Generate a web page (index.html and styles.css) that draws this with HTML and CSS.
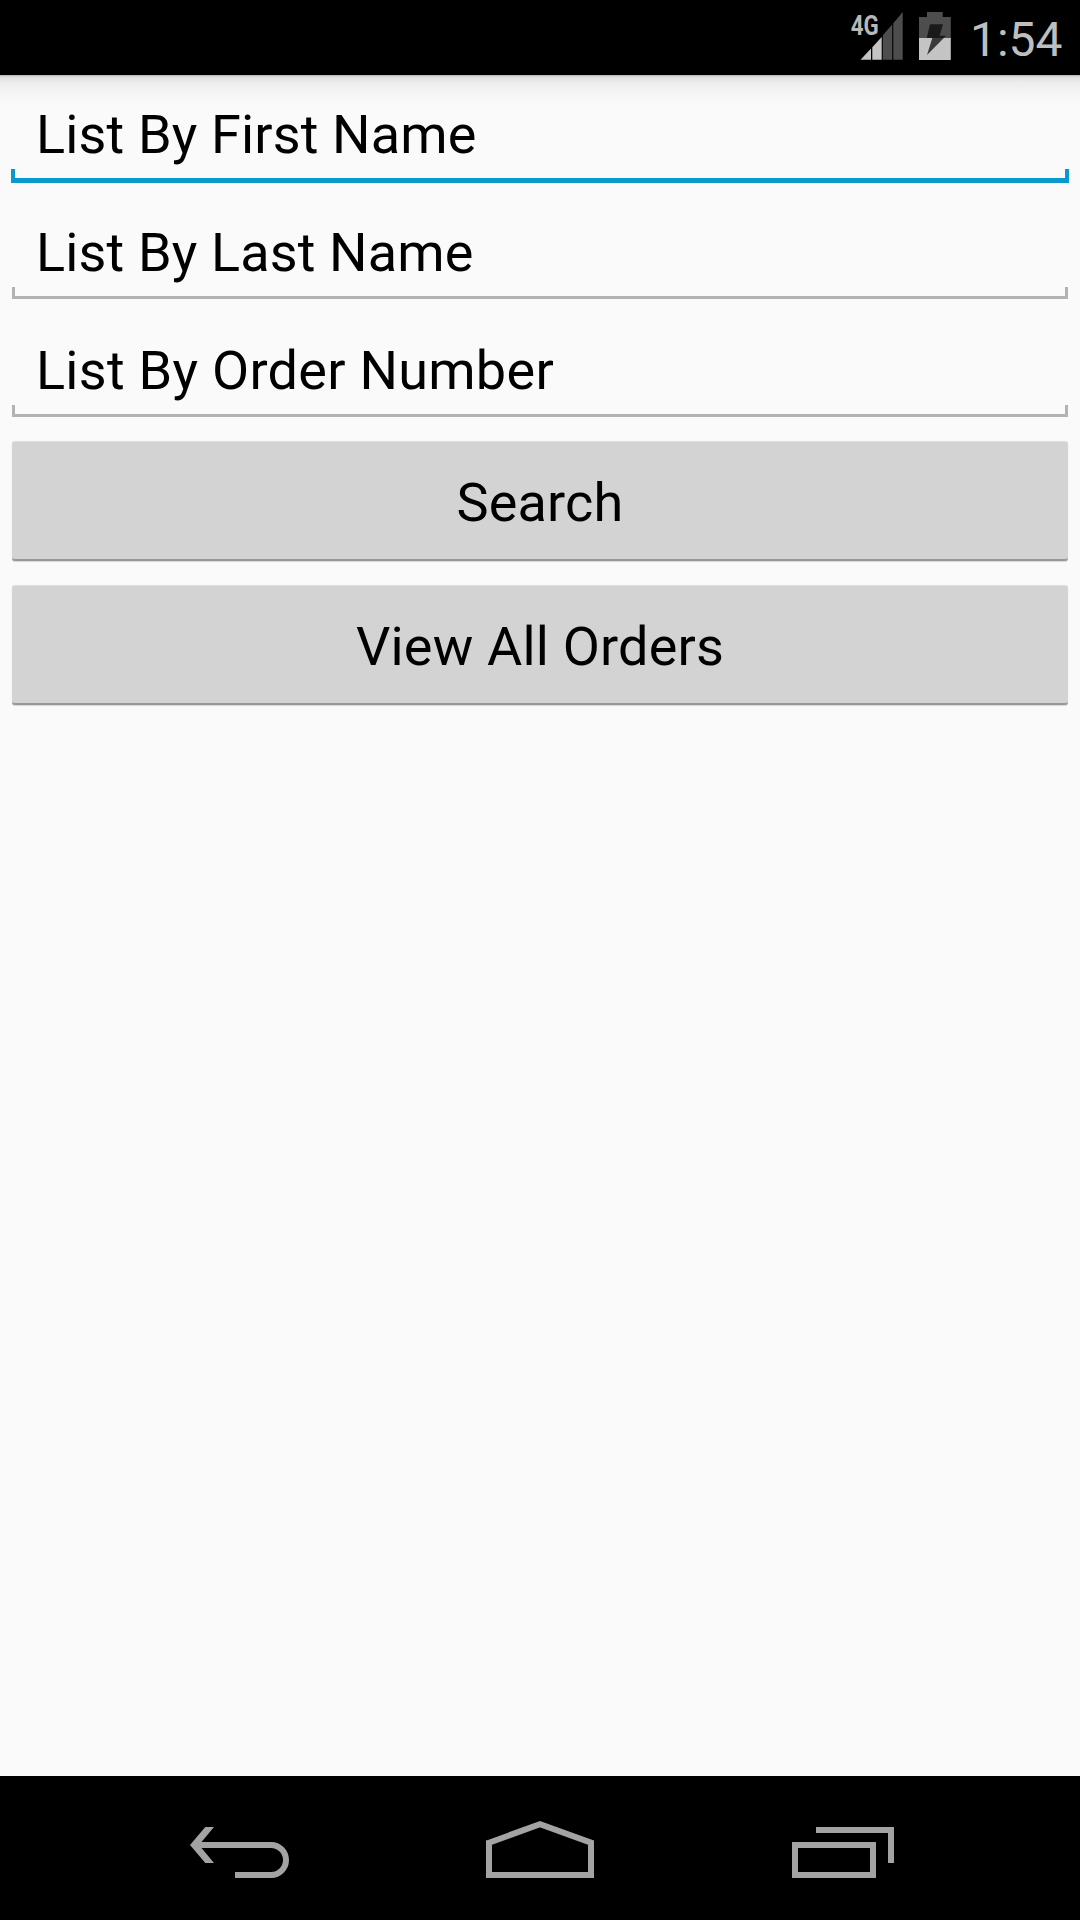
FILE: index.html
```html
<!DOCTYPE html>
<html lang="en">
<head>
  <meta charset="UTF-8">
  <title>Orders</title>
  <meta name="viewport" content="width=device-width, initial-scale=1.0">
  <link rel="stylesheet" href="styles.css">
</head>
<body>
  <div class="status-bar">
    <svg class="status-icons" width="125" height="75" viewBox="0 0 125 75">
      <text class="network" x="20.8" y="34.6" textLength="28" lengthAdjust="spacingAndGlyphs">4G</text>
      <!-- signal -->
      <path fill="#c4c4c4" d="M30.5 59.7L41 48.5V59.7zM42.3 47.2L51.7 37V59.7H42.3z"/>
      <path fill="#4d4d4d" d="M52.8 35.2L62.2 24.5V59.7H52.8zM63.3 23.2L72.7 12V59.7H63.3z"/>
      <!-- battery -->
      <path fill="#4d4d4d" d="M97 12H112.7V17H120.8V38H89V17H97z"/>
      <path fill="#c4c4c4" d="M89 38H120.8V60H89z"/>
      <path fill="#1a1a1a" d="M100 24.3H113L109.7 35.7H116L113.8 38H96.8z"/>
      <path fill="#3a3a3a" d="M102.3 38H113.8L97 55z"/>
    </svg>
    <span class="clock">1:54</span>
  </div>

  <div class="content">
    <div class="field focused"><input type="text" value="List By First Name"></div>
    <div class="field"><input type="text" value="List By Last Name"></div>
    <div class="field"><input class="order-number" type="text" value="List By Order Number"></div>
    <button class="btn">Search</button>
    <button class="btn">View All Orders</button>
  </div>

  <div class="nav-bar">
    <svg width="140" height="144" viewBox="0 6 140 144">
      <path class="line" d="M26 75H101a15 15 0 0 1 0 30H65"/>
      <path fill="#a3a3a3" d="M35.3 57H44L29 75L44 93H35.3L20 75z"/>
    </svg>
    <svg width="140" height="144" viewBox="0 6 140 144">
      <path class="line" d="M19 72.7L70 54.2L121 72.7V105H19z"/>
    </svg>
    <svg width="140" height="144" viewBox="0 6 140 144">
      <path class="line" d="M25 75H103V105H25zM46 60H121V93"/>
    </svg>
  </div>
</body>
</html>
```
FILE: styles.css
```css
body {
  margin: 0;
  height: 1920px;
  display: flex;
  flex-direction: column;
  font-family: Roboto, sans-serif;
  background: #fafafa;
  overflow: hidden;
}
.status-bar {
  height: 75px;
  display: flex;
  justify-content: flex-end;
  background: #000;
}
.status-icons {
  margin-right: 15px;
}
.network {
  font-size: 27px;
  font-weight: bold;
  fill: #b8b8b8;
}
.clock {
  width: 110px;
  font-size: 48px;
  line-height: 80px;
  color: #bebebe;
}
.content {
  flex: 1;
  background: linear-gradient(#b5b5b5, #dedede 2px, #ececec 7px, #f5f5f5 17px, #fafafa 32px);
}
.field {
  position: relative;
  height: 118px;
}
.field input {
  box-sizing: border-box;
  width: 100%;
  height: 118px;
  padding: 1px 36px 0;
  border: none;
  outline: none;
  background: none;
  font: 54px Roboto, sans-serif;
  letter-spacing: 0.15px;
  color: #000;
}
.field .order-number {
  letter-spacing: 0.28px;
}
/* holo style underline with the small ticks at both ends */
.field::after {
  content: "";
  position: absolute;
  left: 12px;
  right: 12px;
  bottom: 12px;
  height: 9px;
  border: 3px solid #b2b2b2;
  border-top: none;
  pointer-events: none;
}
.field.focused::after {
  left: 11px;
  right: 11px;
  bottom: 10px;
  border-color: #0a99cc;
  border-width: 0 4px 5px;
}
.btn {
  display: block;
  width: 1056px;
  height: 120px;
  margin: 12px 12px 24px;
  padding: 5px 0 0;
  border: none;
  border-bottom: 2px solid #979797;
  border-radius: 3px;
  background: #d3d3d3;
  box-shadow: inset 0 1px #dedede, 0 1px 1px #d8d8d8;
  font: 54px Roboto, sans-serif;
  letter-spacing: 0.2px;
  color: #000;
}
.nav-bar {
  height: 144px;
  display: flex;
  justify-content: center;
  gap: 160px;
  background: #000;
}
.line {
  fill: none;
  stroke: #a3a3a3;
  stroke-width: 6;
}
```
